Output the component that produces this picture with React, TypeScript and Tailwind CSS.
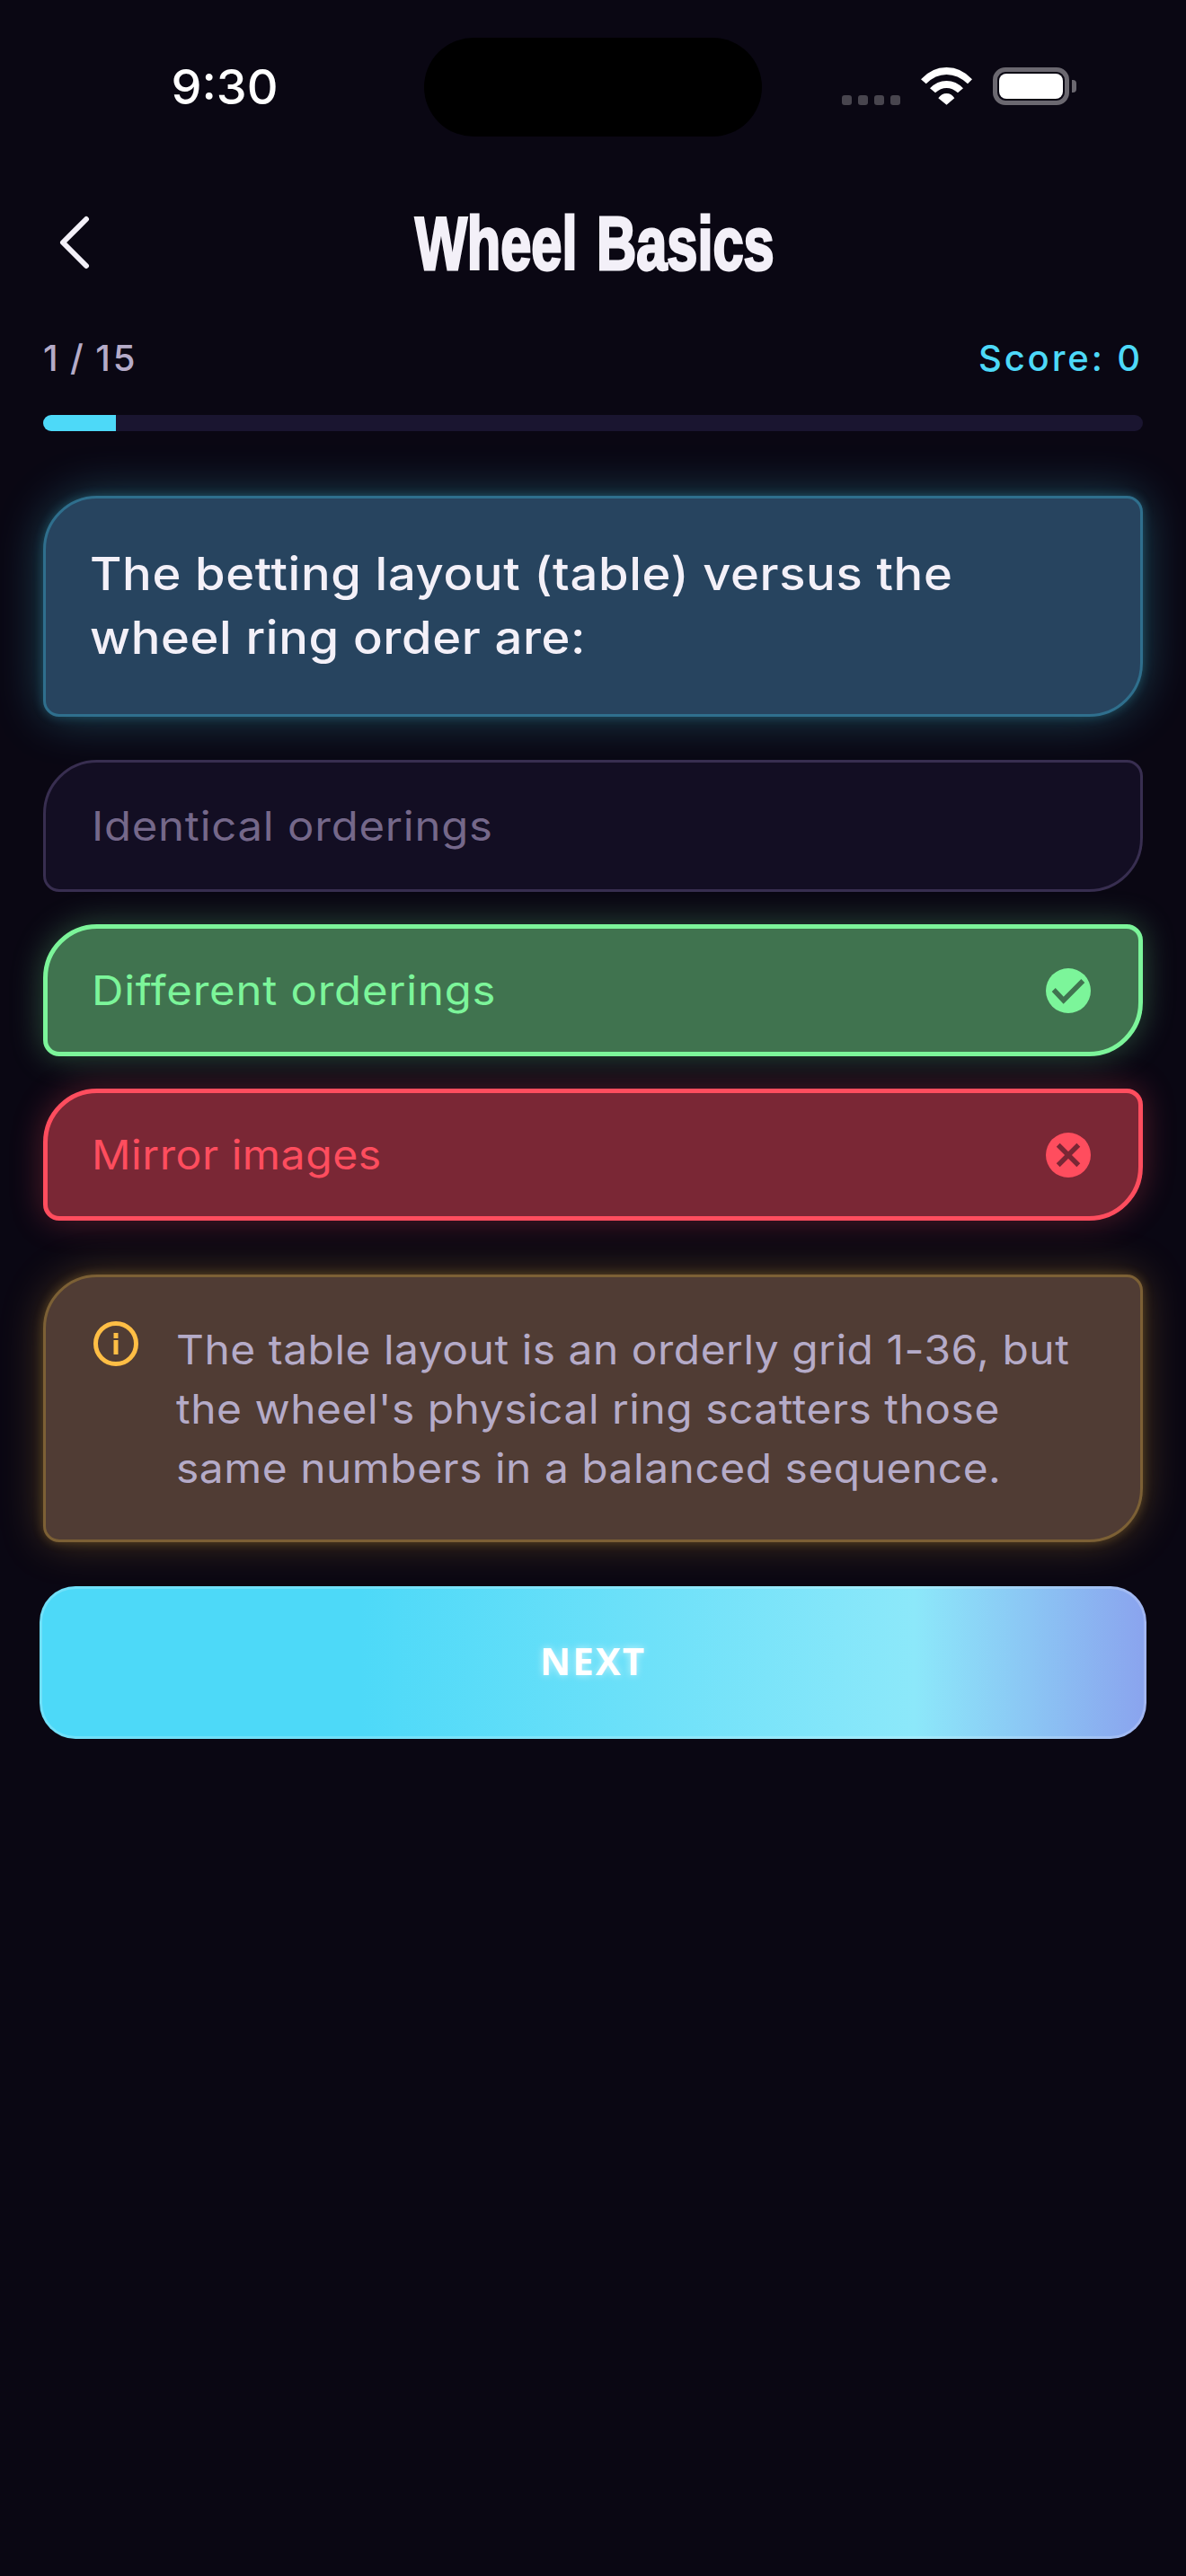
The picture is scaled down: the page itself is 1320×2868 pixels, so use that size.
export default function App() {
  return (
    <div className="relative w-[1320px] h-[2868px] overflow-hidden bg-[#0a0713] font-['Inter','Noto_Sans',sans-serif]">
      {/* island */}
      <div className="absolute left-[472px] top-[42px] w-[376px] h-[110px] rounded-[55px] bg-black" />

      {/* status bar */}
      <div className="flex h-[194px] items-start">
        <div className="w-[500px] pt-[70px] text-center text-[54px] leading-[54px] font-medium text-white font-['Inter',sans-serif]">9:30</div>
        <div className="flex-1 flex items-end pt-[75px] pl-[437px]">
          <div className="flex gap-[7px] pb-0">
            <div className="w-[11px] h-[11px] rounded-[3px] bg-[#48454e]" />
            <div className="w-[11px] h-[11px] rounded-[3px] bg-[#48454e]" />
            <div className="w-[11px] h-[11px] rounded-[3px] bg-[#48454e]" />
            <div className="w-[11px] h-[11px] rounded-[3px] bg-[#48454e]" />
          </div>
          <svg className="ml-[23px]" width="57" height="42" viewBox="0 0 57 42" fill="#fff">
            <path d="M0 13.3Q12 0 28.5 0T57 13.3L52 18.3Q41 8 28.5 8T5.7 18.3Z" />
            <path d="M10 23.3Q18 15 28.5 15T47 23.3L41 28.3Q35 23 28.5 23T16 28.3Z" />
            <path d="M19.3 34.3Q23 29 28.5 29T37.3 34.3L28.5 41.7Z" />
          </svg>
          <div className="ml-[23px] w-[85px] h-[42px] rounded-[14px] border-[5px] border-[#6b6870] p-[2px]">
            <div className="w-full h-full rounded-[8px] bg-white" />
          </div>
          <div className="ml-[3px] mb-[14px] w-[5px] h-[14px] rounded-r-[4px] bg-[#6b6870]" />
        </div>
      </div>

      {/* header */}
      <div className="relative flex h-[183px] items-start justify-center">
        <svg className="absolute left-[62px] top-[42px]" width="44" height="68" viewBox="0 0 44 68" fill="none" stroke="#f3f0f8" strokeWidth="6" strokeLinecap="round" strokeLinejoin="round">
          <path d="M34 8 8 34 34 60" />
        </svg>
        <h1 className="ml-[4px] mt-[27px] text-[84px] leading-[100px] font-bold text-[#f3f0f8] scale-x-[0.73] [word-spacing:6px] font-['Liberation_Sans',sans-serif] [-webkit-text-stroke:3px_#f3f0f8]">Wheel Basics</h1>
      </div>

      <div className="px-[48px]">
        {/* progress */}
        <div className="flex items-center justify-between h-[48px] -mt-[2px] text-[40px] leading-[48px] font-medium tracking-[2.9px]">
          <span className="text-[#b5abc8] [word-spacing:-3px]">1 / 15</span>
          <span className="text-[#4dd9f8]">Score: 0</span>
        </div>
        <div className="mt-[39px] h-[18px] rounded-[9px] bg-[#1a1530] overflow-hidden">
          <div className="w-[81px] h-full bg-[#4dd9f8]" />
        </div>

        {/* question */}
        <div className="mt-[72px] h-[246px] rounded-[60px_18px_60px_18px] border-[3px] border-[#2f6f8d] bg-[#27445f] shadow-[0_0_12px_rgba(77,217,248,0.25),0_0_54px_rgba(77,217,248,0.3)] pl-[49px] pt-[48px]">
          <p className="w-[945px] origin-left scale-x-[1.065] text-[51px] leading-[71px] font-medium tracking-[0.6px] text-[#f3f0f8]">
            The betting layout (table) versus the wheel ring order are:
          </p>
        </div>

        {/* options */}
        <div className="mt-[48px] h-[147px] rounded-[60px_18px_60px_18px] border-[3px] border-[#382e50] bg-[#130e23] flex items-center pl-[51px]">
          <span className="origin-left scale-x-[1.09] text-[45px] tracking-[0.7px] text-[#75688a]">Identical orderings</span>
        </div>

        <div className="mt-[36px] h-[147px] rounded-[60px_18px_60px_18px] border-[5px] border-[#7cf59a] bg-[#40734f] shadow-[0_0_36px_rgba(124,245,154,0.3)] flex items-center justify-between pl-[49px] pr-[53px]">
          <span className="origin-left scale-x-[1.09] text-[45px] tracking-[0.7px] text-[#7cf59a]">Different orderings</span>
          <svg width="50" height="50" viewBox="0 0 50 50">
            <circle cx="25" cy="25" r="25" fill="#7cf59a" />
            <path d="M8.7 24 19.7 35.7 41.3 14" fill="none" stroke="#40734f" strokeWidth="5.5" />
          </svg>
        </div>

        <div className="mt-[36px] h-[147px] rounded-[60px_18px_60px_18px] border-[5px] border-[#ff4d5e] bg-[#7a2735] shadow-[0_0_36px_rgba(255,77,94,0.3)] flex items-center justify-between pl-[49px] pr-[53px]">
          <span className="origin-left scale-x-[1.07] text-[45px] tracking-[0.5px] text-[#ff4d5e]">Mirror images</span>
          <svg width="50" height="50" viewBox="0 0 50 50">
            <circle cx="25" cy="25" r="25" fill="#ff4d5e" />
            <path d="M13.7 13.7 36.3 36.3M36.3 13.7 13.7 36.3" fill="none" stroke="#7a2735" strokeWidth="5.5" />
          </svg>
        </div>

        {/* explanation */}
        <div className="mt-[60px] h-[298px] rounded-[60px_18px_60px_18px] border-[3px] border-[#7c6035] bg-[#503c34] shadow-[0_0_12px_rgba(255,190,69,0.25),0_0_48px_rgba(255,190,69,0.25)] flex items-start pl-[53px] pt-[48px]">
          <svg className="shrink-0 mt-[1px]" width="50" height="50" viewBox="0 0 50 50" fill="none">
            <circle cx="25" cy="25" r="22.5" stroke="#ffbe45" strokeWidth="5" />
            <rect x="22.5" y="13" width="5" height="6" fill="#ffbe45" />
            <rect x="22.5" y="21" width="5" height="16" fill="#ffbe45" />
          </svg>
          <p className="ml-[42px] w-[945px] shrink-0 origin-left scale-x-[1.064] text-[45px] leading-[66px] tracking-[0.5px] text-[#b5abc8]">
            The table layout is an orderly grid 1-36, but the wheel's physical ring scatters those same numbers in a balanced sequence.
          </p>
        </div>
      </div>

      {/* next */}
      <div className="px-[44px] mt-[49px]">
        <button className="w-full h-[170px] rounded-[40px] border-[3px] border-white/20 pb-[6px] bg-[linear-gradient(90deg,#4dd9f8_0%,#4dd9f8_29%,#8ce8fa_79%,#8aa3ee_100%)] [background-origin:border-box] flex items-center justify-center text-[42px] font-bold tracking-[2px] text-white [text-shadow:0_0_8px_rgba(255,255,255,0.6)] font-['Open_Sans',sans-serif]">
          NEXT
        </button>
      </div>
    </div>
  );
}
